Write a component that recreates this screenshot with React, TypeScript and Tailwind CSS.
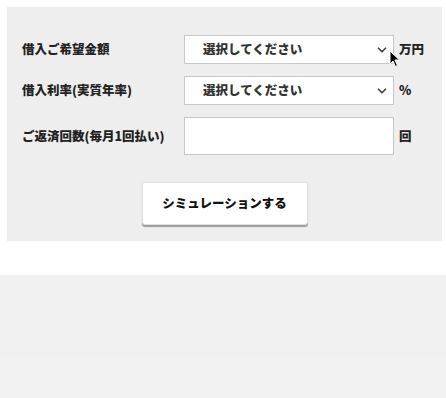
import { ChevronDown } from 'lucide-react'

const font = { fontFamily: '"Noto Sans CJK JP", "Noto Sans", sans-serif' }

function Row({ label, unit, children }: { label: string; unit: string; children: React.ReactNode }) {
  return (
    <div className="flex items-center">
      <div className="w-[162px] shrink-0 text-[12.5px] font-black text-[#222]">{label}</div>
      {children}
      <div className="ml-[5px] text-[12.5px] font-black text-[#222]">{unit}</div>
    </div>
  )
}

function FakeSelect() {
  return (
    <div className="relative flex h-[29px] w-[210px] items-center border border-[#c8c8c8] bg-white pl-[18px]">
      <span className="text-[12.5px] font-black text-[#333]">選択してください</span>
      <ChevronDown className="absolute right-[4px] top-1/2 h-[14px] w-[14px] -translate-y-1/2 text-[#444]" strokeWidth={3} />
    </div>
  )
}

export default function App() {
  return (
    <div className="min-h-[398px] w-[446px] bg-white" style={font}>
      <div className="p-[7px] pr-[4px] pb-0">
        <div className="relative bg-[#eeeeee] px-[15px] pt-[28px] pb-[16px]">
          <div className="flex flex-col gap-[12px]">
            <Row label="借入ご希望金額" unit="万円">
              <FakeSelect />
            </Row>
            <Row label="借入利率(実質年率)" unit="%">
              <FakeSelect />
            </Row>
            <Row label="ご返済回数(毎月1回払い)" unit="回">
              <input className="h-[38px] w-[210px] border border-[#c8c8c8] bg-white outline-none" />
            </Row>
          </div>
          <div className="mt-[27px] flex justify-center">
            <button className="h-[43px] w-[166px] rounded-[3px] border border-[#e2e2e2] bg-white text-[12.5px] font-black text-[#111] shadow-[0_2px_1px_rgba(0,0,0,0.35)]">
              シミュレーションする
            </button>
          </div>
          {/* mouse pointer */}
          <svg className="absolute left-[382px] top-[43px]" width="12" height="18" viewBox="0 0 12 18">
            <path d="M1 1 L1 14 L4 11 L6.5 16.5 L8.5 15.5 L6 10 L10.5 10 Z" fill="#000" stroke="#fff" strokeWidth="1" />
          </svg>
        </div>
      </div>
      <div className="mt-[34px] h-[83px] bg-[#f1f1f1]" />
      <div className="h-[40px] bg-[#f2f2f2]" />
    </div>
  )
}
